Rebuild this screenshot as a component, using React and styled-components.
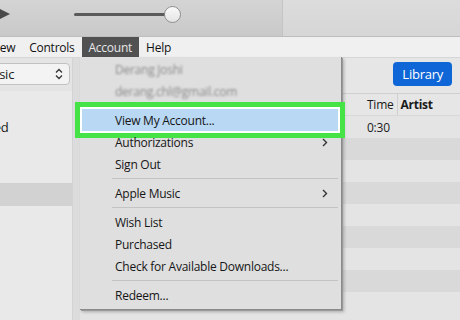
import React from 'react';
import styled, { createGlobalStyle } from 'styled-components';

const GlobalStyle = createGlobalStyle`
    html, body {
        margin: 0;
        padding: 0;
        background: #e6e6e6;
    }
    body {
        font-family: "Open Sans", "Noto Sans", sans-serif;
    }
`;

const Window = styled.div`
    position: relative;
    width: 460px;
    height: 320px;
    overflow: hidden;
    background: #e2e2e2;
    color: #1a1a1a;
    font-size: 12px;
    letter-spacing: -0.25px;
`;

const TopBar = styled.div`
    display: flex;
    height: 36px;
    border-bottom: 1px solid #bdbdbd;
`;

const PlayerControls = styled.div`
    display: flex;
    align-items: center;
    width: 282px;
    background: linear-gradient(#d4d4d4, #c9c9c9);
`;

const PlayIcon = styled.div`
    width: 0;
    height: 0;
    margin-left: -4px;
    margin-bottom: 8px;
    border-top: 7px solid transparent;
    border-bottom: 7px solid transparent;
    border-left: 14px solid #4a4a4a;
`;

const VolumeTrack = styled.div`
    position: relative;
    margin-left: 64px;
    margin-bottom: 8px;
    width: 92px;
    height: 3px;
    border-radius: 2px;
    background: #5a5a5a;
`;

const VolumeKnob = styled.div`
    position: absolute;
    right: -15px;
    top: -7px;
    width: 15px;
    height: 15px;
    border-radius: 50%;
    background: linear-gradient(#fafafa, #e4e4e4);
    border: 1px solid #8e8e8e;
`;

const Display = styled.div`
    flex: 1;
    background: linear-gradient(#dcdcdc, #d6d6d6);
    border-left: 1px solid #c4c4c4;
`;

const MenuBar = styled.div`
    display: flex;
    height: 20px;
    background: #f0f0f0;
    border-bottom: 1px solid #d6d6d6;
`;

const MenuTitle = styled.div`
    display: flex;
    align-items: center;
    padding: 0 7px;
    margin-left: ${p => p.$shift || 0}px;
    background: ${p => (p.$open ? '#515151' : 'transparent')};
    color: ${p => (p.$open ? '#e8e8e8' : '#111')};
    font-size: 12px;
`;

const Body = styled.div`
    display: flex;
    height: 263px;
`;

const Sidebar = styled.div`
    display: flex;
    flex-direction: column;
    width: 72px;
    background: #e9e9e9;
    border-right: 1px solid #d3d3d3;
`;

const SourceBar = styled.div`
    height: 33px;
    background: #e4e4e4;
    padding-top: 5px;
    box-sizing: border-box;
`;

const SourceSelect = styled.div`
    display: flex;
    align-items: center;
    justify-content: space-between;
    margin-left: -31px;
    width: 101px;
    height: 22px;
    box-sizing: border-box;
    padding: 0 6px 0 10px;
    background: #f3f3f3;
    border: 1px solid #c2c2c2;
    border-radius: 4px;
    font-size: 13px;
`;

const SideItem = styled.div`
    display: flex;
    align-items: center;
    height: 23px;
    margin-left: ${p => p.$shift || 0}px;
    background: ${p => (p.$selected ? '#d2d2d2' : 'transparent')};
    font-size: 13px;
    white-space: nowrap;
`;

const Spacer = styled.div`
    height: ${p => p.$h}px;
`;

const Gutter = styled.div`
    width: 7px;
    background: #dcdcdc;
`;

const Main = styled.div`
    flex: 1;
    display: flex;
    flex-direction: column;
    background: #e4e4e4;
`;

const Toolbar = styled.div`
    display: flex;
    justify-content: flex-end;
    align-items: center;
    height: 35px;
    padding-right: 8px;
    background: #e6e6e6;
    border-bottom: 1px solid #cfcfcf;
`;

const LibraryButton = styled.button`
    height: 24px;
    padding: 0 9px;
    border: none;
    border-radius: 4px;
    background: #0f66d6;
    color: #fff;
    font-family: inherit;
    font-size: 13px;
    letter-spacing: -0.25px;
    margin-top: -4px;
`;

const HeaderRow = styled.div`
    display: flex;
    height: 21px;
    align-items: center;
    padding-left: 284px;
    background: #e6e6e6;
    border-bottom: 1px solid #d8d8d8;
`;

const HeaderCell = styled.div`
    padding: 0 3px;
    font-weight: ${p => (p.$bold ? 700 : 400)};
    border-right: ${p => (p.$divider ? '1px solid #cfcfcf' : 'none')};
    line-height: 21px;
`;

const TrackRow = styled.div`
    display: flex;
    align-items: center;
    height: 22px;
    padding-left: 287px;
    background: ${p => (p.$odd ? '#d9d9d9' : '#e4e4e4')};
`;

const DropMenu = styled.div`
    position: absolute;
    left: 80px;
    top: 57px;
    width: 261px;
    padding: 1px 0 3px;
    background: #dfdfdf;
    border-right: 1px solid #8a8a8a;
    border-bottom: 1px solid #8a8a8a;
    box-shadow: 1px 1px 0 #9a9a9a, 2px 2px 3px rgba(0, 0, 0, 0.25);
`;

const Item = styled.div`
    position: relative;
    display: flex;
    align-items: center;
    justify-content: space-between;
    height: 22px;
    margin: 0 3px 0 2px;
    padding: 0 10px 0 33px;
    background: ${p => (p.$active ? '#b8d8f4' : 'transparent')};
    box-shadow: ${p => (p.$active ? '0 0 0 2px #fff, 0 0 0 7px #45e345' : 'none')};
    color: ${p => (p.$muted ? '#8a8a8a' : '#161616')};
    font-size: 12px;
    white-space: nowrap;
`;

const Blurred = styled.span`
    filter: blur(1.3px);
`;

const Separator = styled.div`
    height: 1px;
    margin: 3px 3px 3px 32px;
    background: #c3c3c3;
`;

const Chevron = () => (
    <svg width="6" height="9" viewBox="0 0 6 9">
        <path d="M1 1 L4.5 4.5 L1 8" fill="none" stroke="#333" strokeWidth="1.4" />
    </svg>
);

const UpDown = () => (
    <svg width="8" height="12" viewBox="0 0 8 12">
        <path d="M1 4.5 L4 1.5 L7 4.5 M1 7.5 L4 10.5 L7 7.5" fill="none" stroke="#333" strokeWidth="1.3" />
    </svg>
);

const rows = ['0:30', '', '', '', '', '', '', '', ''];

const App = () => {
    return (
        <>
            <GlobalStyle />
            <Window>
                <TopBar>
                    <PlayerControls>
                        <PlayIcon />
                        <VolumeTrack>
                            <VolumeKnob />
                        </VolumeTrack>
                    </PlayerControls>
                    <Display />
                </TopBar>
                <MenuBar>
                    <MenuTitle $shift={-17}>View</MenuTitle>
                    <MenuTitle>Controls</MenuTitle>
                    <MenuTitle $open>Account</MenuTitle>
                    <MenuTitle>Help</MenuTitle>
                </MenuBar>
                <Body>
                    <Sidebar>
                        <SourceBar>
                            <SourceSelect>
                                <span>Music</span>
                                <UpDown />
                            </SourceSelect>
                        </SourceBar>
                        <Spacer $h={24} />
                        <SideItem $shift={-82}>Recently Added</SideItem>
                        <Spacer $h={45} />
                        <SideItem $selected />
                    </Sidebar>
                    <Gutter />
                    <Main>
                        <Toolbar>
                            <LibraryButton>Library</LibraryButton>
                        </Toolbar>
                        <HeaderRow>
                            <HeaderCell $divider>Time</HeaderCell>
                            <HeaderCell $bold>Artist</HeaderCell>
                        </HeaderRow>
                        {rows.map((t, i) => (
                            <TrackRow key={i} $odd={i % 2 === 1}>{t}</TrackRow>
                        ))}
                    </Main>
                </Body>
                <DropMenu>
                    <Item $muted><Blurred>Derang Joshi</Blurred></Item>
                    <Item $muted><Blurred>derang.chl@gmail.com</Blurred></Item>
                    <Separator />
                    <Item $active>View My Account...</Item>
                    <Item>Authorizations <Chevron /></Item>
                    <Item>Sign Out</Item>
                    <Separator />
                    <Item>Apple Music <Chevron /></Item>
                    <Separator />
                    <Item>Wish List</Item>
                    <Item>Purchased</Item>
                    <Item>Check for Available Downloads...</Item>
                    <Separator />
                    <Item>Redeem...</Item>
                </DropMenu>
            </Window>
        </>
    );
};

export default App;
